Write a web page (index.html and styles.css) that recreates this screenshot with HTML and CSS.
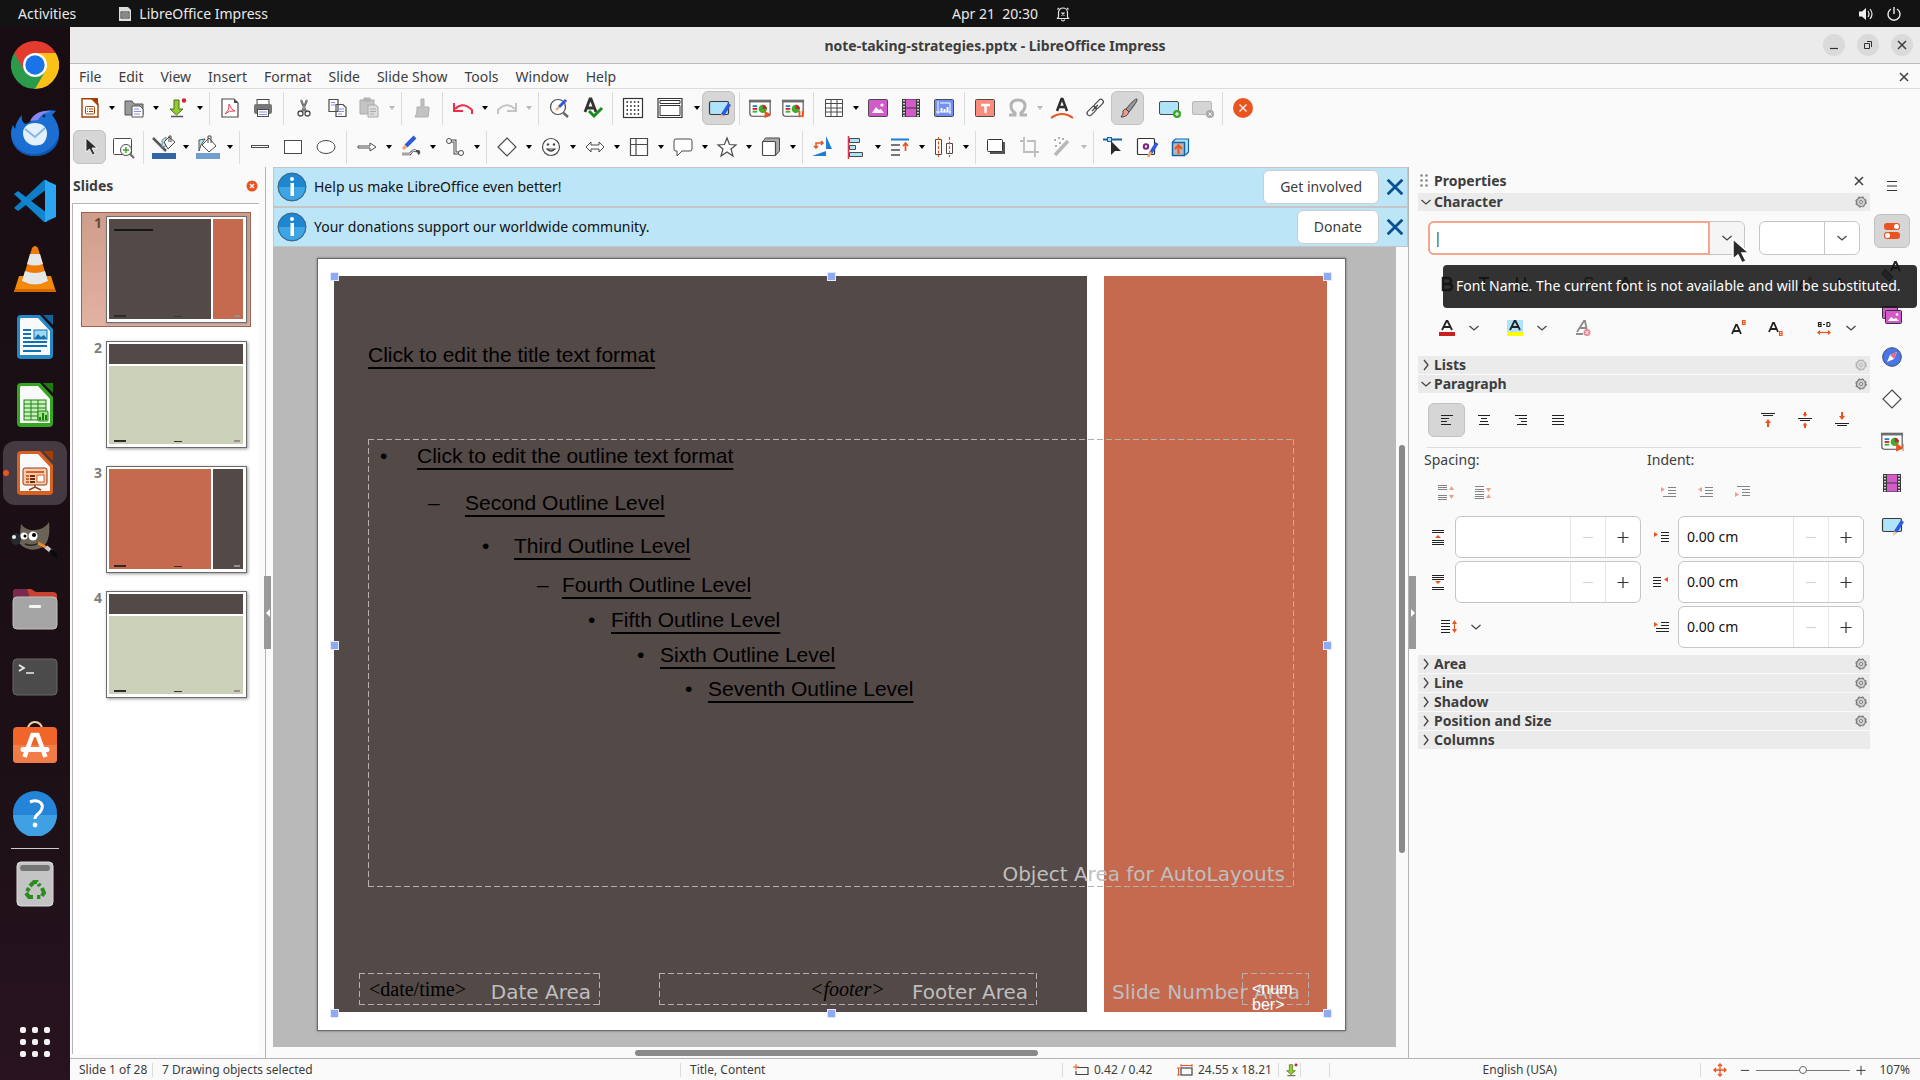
FILE: index.html
```html
<!DOCTYPE html>
<html lang="en">
  <head>
    <meta charset="UTF-8" />
    <meta name="viewport" content="width=device-width, initial-scale=1.0" />
    <title>note-taking-strategies.pptx - LibreOffice Impress</title>
    <link rel="stylesheet" href="styles.css">
  </head>
  <body>
    <!-- Shared icons -->
    <svg class="sprite" aria-hidden="true">
      <symbol id="chevron" viewBox="0 0 12 12"><path d="M1.500 4l4.500 4 4.500-4" fill="none" stroke="#444" stroke-width="1.300"/></symbol>
      <symbol id="chevron-right" viewBox="0 0 12 12"><path d="M4 1l4 5-4 5" fill="none" stroke="#444" stroke-width="1.300"/></symbol>
      <symbol id="cross" viewBox="0 0 12 12"><path d="M2 2l8 8M10 2l-8 8" fill="none" stroke="currentColor" stroke-width="1.500"/></symbol>
      <symbol id="plus" viewBox="0 0 12 12"><path d="M.5 6.500h11M6 1v11" fill="none" stroke="currentColor" stroke-width="1.200"/></symbol>
      <symbol id="minus" viewBox="0 0 12 12"><path d="M1 6.500h10" fill="none" stroke="currentColor" stroke-width="1.200"/></symbol>
      <symbol id="gear" viewBox="0 0 12 12"><circle cx="6" cy="6" r="4.500" fill="#d0d0d0" stroke="#777" stroke-width="1.200"/><circle cx="6" cy="6" r="5.300" fill="none" stroke="#777" stroke-dasharray="2.200 2"/><circle cx="6" cy="6" r="1.500" fill="#fff" stroke="#777"/></symbol>
      <symbol id="info" viewBox="0 0 30 30"><circle cx="15" cy="15" r="14" fill="#1f86d2" stroke="#40617b"/><path d="M2 15a13 13 0 0 0 26 0z" fill="#3fa4e3"/><circle cx="15" cy="7" r="2" fill="#fff"/><rect x="13.500" y="11" width="3.500" height="13" fill="#fff"/></symbol>
      <symbol id="layout-pencil" viewBox="0 0 24 24"><rect x="2.500" y="5.500" width="19" height="13" rx="1.500" fill="#aee3f9" stroke="#3a3a38" stroke-width="1.200"/><path d="M21 7l3 2-7 11-3-2z" fill="#2e5bdc"/><path d="M14 18l3 2-4 3z" fill="#f4c08f"/></symbol>
      <symbol id="film" viewBox="0 0 24 24"><rect x="3" y="3" width="18" height="18" fill="#3a3a38"/><rect x="7" y="3.500" width="10" height="8" fill="#d25bc9"/><rect x="7" y="12.500" width="10" height="8" fill="#d25bc9"/><path d="M5 4v17M19 4v17" stroke="#fff" stroke-width="1.500" stroke-dasharray="1.500 1.500"/></symbol>
      <symbol id="board" viewBox="0 0 26 24"><path d="M2 5v13q0 3 3 3h16q3 0 3-3V5" fill="#fff" stroke="#4a4a48" stroke-width="1.200"/><rect x="1" y="3" width="24" height="3" fill="#6e6e6e"/><rect x="5" y="9" width="5" height="2" fill="#1c7fd6"/><rect x="5" y="12" width="5" height="2" fill="#d0213a"/><rect x="5" y="15" width="5" height="2" fill="#3fae2a"/><circle cx="16" cy="13" r="4.500" fill="#3fae2a"/><path d="M16 13V8.500a4.500 4.500 0 0 1 4.500 4.500z" fill="#c9213a"/></symbol>
      <symbol id="diamond" viewBox="0 0 24 24"><path d="M12 3l9 9-9 9-9-9z" fill="#fff" stroke="#4a4a48" stroke-width="1.200"/></symbol>
      <symbol id="save" viewBox="0 0 24 24"><path d="M8 4h5v9h4l-6.500 6L4 13h4z" fill="#93cc2f" stroke="#4a6a1a"/><path d="M5 20.500h12" stroke="#555" stroke-width="1.500"/><circle cx="18" cy="4.500" r="2.200" fill="#d0213a"/></symbol>
    </svg>

    <header class="topbar">
      <div class="topbar-left">
        <span>Activities</span>
        <span class="topbar-app">
          <svg width="14" height="16" viewBox="0 0 14 16"><path d="M1 1h9l3 3v11H1z" fill="#ddd"/><rect x="3" y="6" width="8" height="6" fill="none" stroke="#333"/><path d="M4 8h6M4 10h6" stroke="#333"/></svg>
          LibreOffice Impress
        </span>
      </div>
      <div class="topbar-clock">
        <span>Apr 21&nbsp; 20:30</span>
        <svg width="14" height="16" viewBox="0 0 14 16"><path d="M2.500 11V6.500a4.500 4.500 0 0 1 9 0V11l1 1.500h-11zM5.500 13.500a1.500 1.500 0 0 0 3 0M3 2L1.500 3.500M11 2l1.500 1.500M5.500 6.500l3 3M8.500 6.500l-3 3" fill="none" stroke="#e8e8e8" stroke-width="1.200"/></svg>
      </div>
      <div class="topbar-tray">
        <svg width="16" height="16" viewBox="0 0 16 16"><path d="M1 5.500h3L8 2v12l-4-3.500H1z" fill="#eee"/><path d="M10 5q2 3 0 6M12 3q4 5 0 10" fill="none" stroke="#eee" stroke-width="1.200"/></svg>
        <svg width="16" height="16" viewBox="0 0 16 16"><path d="M5 3a6 6 0 1 0 6 0M8 1v7" fill="none" stroke="#eee" stroke-width="1.400"/></svg>
      </div>
    </header>

    <div class="desktop">
      <nav class="dock" aria-label="Dock">
        <button class="dock-item" aria-label="Google Chrome">
          <svg width="48" height="48" viewBox="0 0 48 48"><path d="M24 24L3.200 12A24 24 0 0 1 44.800 12z" fill="#e33b2e"/><path d="M24 24L44.800 12A24 24 0 0 1 24 48z" fill="#fbc116"/><path d="M24 24V48A24 24 0 0 1 3.200 12z" fill="#2a9a4b"/><path d="M24 12h20.800L36 30z" fill="#fbc116"/><path d="M13.600 30L3.200 12 24 12z" fill="#e33b2e"/><path d="M34.400 30L24 48 13.600 30z" fill="#2a9a4b"/><circle cx="24" cy="24" r="12" fill="#fff"/><circle cx="24" cy="24" r="9.700" fill="#1a73e8"/></svg>
        </button>
        <button class="dock-item" aria-label="Thunderbird">
          <svg width="48" height="48" viewBox="0 0 48 48"><path d="M24 10C28 2 38 0 45 2l-4 4c5 6 7 12 7 18 0 13-10 23-24 23C9 47 0 37 0 24c0-3 1-6 2-8l2 4c1-6 3-10 7-14-1 5 1 8 4 9z" fill="#1b6fd3"/><path d="M0 24c2 16 14 22 26 21 12-2 19-9 22-19 0 12-10 21-24 21S0 37 0 24z" fill="#0e55ae"/><path d="M19 12c4-8 13-12 21-9-7 0-10 3-13 8z" fill="#8d86ee"/><path d="M12 24c0-6 5-10 12-10s12 4 12 10-3 12-8 12c-9 2-16-4-16-12z" fill="#e4f1fd"/><path d="M14 20l10 8 10-9" fill="none" stroke="#86b6e8" stroke-width="2"/><circle cx="33" cy="7" r="1.500" fill="#062a63"/></svg>
        </button>
        <button class="dock-item" aria-label="Visual Studio Code">
          <svg width="44" height="44" viewBox="0 0 44 44"><path d="M1 29l4 3L34 10V1L31 1z" fill="#0f7dc6"/><path d="M1 15l4-3L34 34v9h-3z" fill="#1284d0"/><path d="M32 1l11 5v32l-11 5z" fill="#2aa6f2"/></svg>
        </button>
        <button class="dock-item" aria-label="VLC media player">
          <svg width="44" height="48" viewBox="0 0 44 48"><path d="M6 31h32l5 16H1z" fill="#f48a0c"/><path d="M2 44h40l1 3H1z" fill="#d56b00"/><path d="M19 3q3-4 6 0l10 34q-13 7-26 0z" fill="#f07c08"/><path d="M17 9h10l3 10q-8 3-16 0zM12 26q10 4 20 0l3 10q-13 7-26 0z" fill="#e6e8e8"/></svg>
        </button>
        <button class="dock-item" aria-label="LibreOffice Writer">
          <svg width="38" height="46" viewBox="0 0 38 46"><path d="M5 1h19l13 14v26q0 4-4 4H5q-4 0-4-4V5q0-4 4-4z" fill="#2488c4"/><path d="M27 1h10v10z" fill="#0f669e"/><path d="M5 4h17l12 13v24H4V5z" fill="#fafafa"/><path d="M7 16h8M7 20h8M7 24h8M7 28h24M7 32h24M7 37h18" stroke="#0f72b4" stroke-width="2"/><rect x="18" y="16" width="13" height="9" fill="#9fd8f5" stroke="#0f72b4"/><path d="M18 25l4-5 3 3 3-2 3 4z" fill="#0f72b4"/></svg>
        </button>
        <button class="dock-item" aria-label="LibreOffice Calc">
          <svg width="38" height="46" viewBox="0 0 38 46"><path d="M5 1h19l13 14v26q0 4-4 4H5q-4 0-4-4V5q0-4 4-4z" fill="#33a71e"/><path d="M27 1h10v10z" fill="#1f7d10"/><path d="M5 4h17l12 13v24H4V5z" fill="#fafafa"/><rect x="8" y="18" width="22" height="20" fill="#c8f0bd" stroke="#1f8110"/><path d="M8 22h22M8 26h22M8 30h22M8 34h22M15 18v20M22 18v20" stroke="#1f8110"/><rect x="22" y="29" width="10" height="10" rx="1" fill="#9fe08c" stroke="#1f8110"/><path d="M24 38v-3M27 38v-7M30 38v-5" stroke="#1f8110" stroke-width="2"/></svg>
        </button>
        <button class="dock-item dock-item-active" aria-label="LibreOffice Impress">
          <svg width="38" height="46" viewBox="0 0 38 46"><path d="M5 1h19l13 14v26q0 4-4 4H5q-4 0-4-4V5q0-4 4-4z" fill="#d9601f"/><path d="M27 1h10v10z" fill="#a33e04"/><path d="M5 4h17l12 13v24H4V5z" fill="#fafafa"/><rect x="7" y="18" width="24" height="17" rx="2" fill="#f6cdb4" stroke="#8d3c10"/><path d="M10 22h18" stroke="#d9601f" stroke-width="2"/><path d="M10 26h3M10 29h3M10 32h3" stroke="#d9601f" stroke-width="2"/><path d="M14 26h5M14 29h5M14 32h5" stroke="#6c2a06" stroke-width="2"/><rect x="21" y="25" width="7" height="7" fill="#fff" stroke="#d9601f"/><path d="M19 35v2M13 40l6-3 6 3" fill="none" stroke="#8d3c10" stroke-width="1.500"/></svg>
        </button>
        <button class="dock-item" aria-label="GIMP">
          <svg width="48" height="42" viewBox="0 0 48 42"><path d="M10 4q5 7 14 6 10-1 14-8 2 18-6 25-14 7-24-4z" fill="#6b6355"/><ellipse cx="5" cy="19" rx="5" ry="6" fill="#222b30"/><circle cx="3" cy="17" r="2" fill="#eee"/><circle cx="13" cy="16" r="3.500" fill="#fff"/><circle cx="22" cy="16" r="4.500" fill="#fff"/><circle cx="14" cy="16" r="1.500"/><circle cx="23" cy="15" r="2"/><path d="M14 24q8 3 14-1" fill="none" stroke="#222" stroke-width="1.500"/><path d="M27 23l11 6" stroke="#e8892c" stroke-width="3"/><path d="M35 27l6 5" stroke="#ccc" stroke-width="4"/><path d="M40 29q6 2 7 10-6-2-9-7z" fill="#0b0b0b"/></svg>
        </button>
        <button class="dock-item" aria-label="Files">
          <svg width="46" height="42" viewBox="0 0 46 42"><path d="M1 5q0-4 4-4h14l5 3h17q4 0 4 4v10H1z" fill="#c9412f"/><path d="M1 5q0-4 4-4h10l4 12H1z" fill="#7b2a4f"/><rect x="1" y="9" width="44" height="32" rx="4" fill="#a5a5a5" stroke="#c0c0c0"/><rect x="17" y="17" width="12" height="3" rx="1" fill="#f5f5f5"/></svg>
        </button>
        <button class="dock-item" aria-label="Terminal">
          <svg width="46" height="38" viewBox="0 0 46 38"><rect x="1" y="1" width="44" height="36" rx="4" fill="#4b4b4b" stroke="#686868"/><path d="M7 7l5 3-5 3M14 15h8" fill="none" stroke="#eee" stroke-width="1.700"/></svg>
        </button>
        <button class="dock-item" aria-label="Ubuntu Software">
          <svg width="46" height="50" viewBox="0 0 46 50"><path d="M16 9a7 7 0 0 1 14 0" fill="none" stroke="#f3d3a5" stroke-width="2"/><rect x="1" y="7" width="44" height="36" rx="4" fill="#f0652a"/><path d="M1 25h44v14q0 4-4 4H5q-4 0-4-4z" fill="#f27c47"/><path d="M12.500 37l8-22h5l8 22" fill="none" stroke="#fff" stroke-width="4.500"/><path d="M11 29.500h24" stroke="#fff" stroke-width="5" stroke-linecap="round"/></svg>
        </button>
        <button class="dock-item" aria-label="Help">
          <svg width="46" height="46" viewBox="0 0 46 46"><circle cx="23" cy="23" r="22" fill="#2384d8"/><path d="M1 25a22 22 0 0 0 44 0z" fill="#3fa0e4"/><path d="M18 12q7-3 11 1 3 4-1 9-5 4-5 7" fill="none" stroke="#fff" stroke-width="3"/><circle cx="23" cy="35" r="2.400" fill="#fff"/></svg>
        </button>
        <hr class="dock-line" />
        <button class="dock-item" aria-label="Trash">
          <svg width="38" height="46" viewBox="0 0 38 46"><rect x="1" y="1" width="36" height="44" rx="4" fill="#c4c4c4" stroke="#dcdcdc"/><rect x="4" y="4" width="30" height="6" rx="3" fill="#757575"/><g fill="none" stroke="#2b8a20" stroke-width="4"><path d="M14 25l4-4h3l3 4M26 27l2 5-3 4h-4M17 36h-4l-3-4 3-5" stroke-dasharray="9 2"/></g></svg>
        </button>
        <button class="dock-item dock-apps" aria-label="Show applications">
          <svg width="30" height="30" viewBox="0 0 30 30" fill="#f2f2f2"><rect width="6" height="6" rx="2"/><rect x="12" width="6" height="6" rx="2"/><rect x="24" width="6" height="6" rx="2"/><rect y="12" width="6" height="6" rx="2"/><rect x="12" y="12" width="6" height="6" rx="2"/><rect x="24" y="12" width="6" height="6" rx="2"/><rect y="24" width="6" height="6" rx="2"/><rect x="12" y="24" width="6" height="6" rx="2"/><rect x="24" y="24" width="6" height="6" rx="2"/></svg>
        </button>
      </nav>

      <main class="window">
        <div class="titlebar">
          <h1>note-taking-strategies.pptx - LibreOffice Impress</h1>
          <div class="window-buttons">
            <button aria-label="Minimize"><svg width="12" height="12" viewBox="0 0 12 12"><path d="M2 9.500h8" stroke="#333" stroke-width="1.200"/></svg></button>
            <button aria-label="Restore"><svg width="12" height="12" viewBox="0 0 12 12"><path d="M2.500 4.500h5v5h-5zM5 2.500h4.500V8" fill="none" stroke="#333"/></svg></button>
            <button aria-label="Close"><svg width="12" height="12"><use href="#cross"/></svg></button>
          </div>
        </div>

        <div class="menubar">
          <button>File</button>
          <button>Edit</button>
          <button>View</button>
          <button>Insert</button>
          <button>Format</button>
          <button>Slide</button>
          <button>Slide Show</button>
          <button>Tools</button>
          <button>Window</button>
          <button>Help</button>
          <button class="menubar-close" aria-label="Close document"><svg width="12" height="12"><use href="#cross"/></svg></button>
        </div>

        <!-- Standard toolbar -->
        <div class="toolbar" role="toolbar" aria-label="Standard">
          <button class="tool" aria-label="New"><svg viewBox="0 0 24 24"><path d="M4 2.700h11l5 5V21H4z" fill="#fff" stroke="#a33e04" stroke-width="1.400"/><path d="M12 2h8v8z" fill="#a33e04"/><rect x="7.500" y="10.500" width="9" height="7.500" rx="1" fill="none" stroke="#a33e04"/><path d="M9 13h1M11 13h4M9 15.500h1M11 15.500h4" stroke="#a33e04"/></svg></button>
          <button class="drop" aria-label="New options"></button>
          <button class="tool" aria-label="Open"><svg viewBox="0 0 24 24"><path d="M3 19V5h7l2 3h9v11z" fill="#9b9b9b" stroke="#555"/><path d="M10 10h8l3 3v8H10z" fill="#fff" stroke="#555"/><path d="M12 13h5M12 15.500h7M12 18h6" stroke="#8b8bea"/></svg></button>
          <button class="drop" aria-label="Open options"></button>
          <button class="tool" aria-label="Save"><svg viewBox="0 0 24 24"><use href="#save"/></svg></button>
          <button class="drop" aria-label="Save options"></button>
          <span class="sep"></span>
          <button class="tool" aria-label="Export as PDF"><svg viewBox="0 0 24 24"><path d="M4 3h12l4 4v14H4z" fill="#fff" stroke="#4a4a48" stroke-width="1.200"/><path d="M16 3v4h4z" fill="#4a4a48"/><path d="M11 8q2 6 6 7-6-1-10 3 5-4 4-10z" fill="none" stroke="#ee3a57"/></svg></button>
          <button class="tool" aria-label="Print"><svg viewBox="0 0 24 24"><rect x="6" y="3.500" width="12" height="6" fill="#fff" stroke="#4a4a48"/><rect x="3" y="8" width="18" height="10" rx="2" fill="#777"/><rect x="6.500" y="13.500" width="11" height="7" fill="#fff" stroke="#4a4a48"/><path d="M8 16h8M8 18.500h8" stroke="#8b8bea"/></svg></button>
          <span class="sep"></span>
          <button class="tool" aria-label="Cut"><svg viewBox="0 0 24 24"><path d="M9 4l5 12M15 4l-5 12" stroke="#4a4a48" stroke-width="2"/><path d="M9 4l5 12M15 4l-5 12" stroke="#ccc" stroke-width=".6"/><circle cx="8.500" cy="17.500" r="2.500" fill="none" stroke="#4a4a48" stroke-width="1.300"/><circle cx="15.500" cy="17.500" r="2.500" fill="none" stroke="#4a4a48" stroke-width="1.300"/></svg></button>
          <button class="tool" aria-label="Copy"><svg viewBox="0 0 24 24"><path d="M4 3.500h9v12H4zM11 8.500h7l3 3v9H11z" fill="#fff" stroke="#4a4a48" stroke-width="1.200"/><path d="M6 6.500h4M6 9h4M13 13h6M13 15.500h6M13 18h4" stroke="#8b8bea"/></svg></button>
          <button class="tool" aria-label="Paste"><svg viewBox="0 0 24 24"><path d="M2 4h14v14H2zM6 2h6v3H6z" fill="#c4c4c4" stroke="#aaa"/><path d="M10 9h8l2 2v10H10z" fill="#ddd" stroke="#aaa"/><path d="M12 13h6M12 15.500h6M12 18h4" stroke="#aaa"/></svg></button>
          <button class="drop drop-off" aria-label="Paste options"></button>
          <span class="sep"></span>
          <button class="tool" aria-label="Clone formatting"><svg viewBox="0 0 24 24"><path d="M11 3h3v8h5v3l-1 7H5q2-3 2-7v-3h4z" fill="#c2c2c2" stroke="#b0b0b0"/></svg></button>
          <span class="sep"></span>
          <button class="tool" aria-label="Undo"><svg viewBox="0 0 24 24"><path d="M4 13q8-8 17 1v4" fill="none" stroke="#ef2b45" stroke-width="2"/><path d="M3 7v8h9" fill="none" stroke="#ef2b45" stroke-width="2"/></svg></button>
          <button class="drop" aria-label="Undo options"></button>
          <button class="tool" aria-label="Redo"><svg viewBox="0 0 24 24"><path d="M20 13q-8-8-17 1v4" fill="none" stroke="#c4c4c4" stroke-width="2"/><path d="M21 7v8h-9" fill="none" stroke="#c4c4c4" stroke-width="2"/></svg></button>
          <button class="drop drop-off" aria-label="Redo options"></button>
          <span class="sep"></span>
          <button class="tool" aria-label="Find and replace"><svg viewBox="0 0 24 24"><circle cx="11" cy="11" r="7.500" fill="#fff" stroke="#4a4a48" stroke-width="1.200"/><path d="M16.500 17l4.500 4" stroke="#666" stroke-width="2.500"/><path d="M19 4l-7 7" stroke="#2e5bdc" stroke-width="3"/><path d="M12 11l-3 3" stroke="#f4a46a" stroke-width="2"/></svg></button>
          <button class="tool" aria-label="Spelling"><svg viewBox="0 0 24 24"><path d="M5 16l5-13h1l5 13M7 12h8" fill="none" stroke="#333" stroke-width="2.800"/><path d="M9 15l5 5 8-8" fill="none" stroke="#178a1f" stroke-width="3"/></svg></button>
          <span class="sep"></span>
          <button class="tool" aria-label="Display grid"><svg viewBox="0 0 24 24"><rect x="2.500" y="2.500" width="19" height="19" fill="#fff" stroke="#333" stroke-width="1.200"/><g stroke="#111" stroke-width="1.500" stroke-dasharray="1.500 2.200"><path d="M5.500 6h14M5.500 10h14M5.500 14h14M5.500 18h14"/></g></svg></button>
          <button class="tool tool-wide" aria-label="Display views"><svg viewBox="0 0 28 24"><path d="M2 2.500h24v19H2z" fill="#fff" stroke="#333" stroke-width="1.200"/><path d="M4 4.500h20v3H4zM4 9.500h20v10H4z" fill="none" stroke="#333"/></svg></button>
          <button class="drop" aria-label="Display views options"></button>
          <button class="tool tool-on" aria-label="Master slide"><svg viewBox="0 0 24 24"><use href="#layout-pencil"/></svg></button>
          <span class="sep"></span>
          <button class="tool" aria-label="Start from first slide"><svg viewBox="0 0 26 24"><use href="#board"/><path d="M18 15l7 4-7 4z" fill="#e95420"/></svg></button>
          <button class="tool" aria-label="Start from current slide"><svg viewBox="0 0 26 24"><use href="#board"/><path d="M20 15v7M23.500 15v7" stroke="#e95420" stroke-width="2"/></svg></button>
          <span class="sep"></span>
          <button class="tool" aria-label="Table"><svg viewBox="0 0 24 24"><path d="M3.500 3.500h17v17h-17zM9 3.500v17M15 3.500v17M3.500 7.500h17M3.500 12h17M3.500 16h17" fill="#fff" stroke="#4a4a48"/></svg></button>
          <button class="drop" aria-label="Table options"></button>
          <button class="tool" aria-label="Insert image"><svg viewBox="0 0 24 24"><rect x="2.500" y="3.500" width="19" height="17" rx="1" fill="#d25bc9" stroke="#4a4a48"/><path d="M6 17l4-6 3 3 2-1 3 4z" fill="#fff"/><circle cx="16" cy="9" r="1.600" fill="#fff"/></svg></button>
          <button class="tool" aria-label="Insert media"><svg viewBox="0 0 24 24"><use href="#film"/></svg></button>
          <button class="tool" aria-label="Insert chart"><svg viewBox="0 0 24 24"><rect x="2.500" y="3.500" width="19" height="17" rx="1" fill="#7391f4" stroke="#4a4a48"/><path d="M6 5v13M4 16h15M8 7h10v11" fill="none" stroke="#fff"/><path d="M9.500 16v-4M12.500 16v-3M15.500 16v-5" stroke="#fff" stroke-width="2"/></svg></button>
          <span class="sep"></span>
          <button class="tool" aria-label="Insert text box"><svg viewBox="0 0 24 24"><rect x="2.500" y="3.500" width="19" height="17" rx="1" fill="#fb8b7a" stroke="#4a4a48"/><path d="M8 9h9M12.500 9v8" stroke="#fff" stroke-width="2.500"/></svg></button>
          <button class="tool" aria-label="Special character"><svg viewBox="0 0 24 24"><path d="M3 19h6v-2q-4-3-4-7 0-6 7-6t7 6q0 4-4 7v2h6" fill="none" stroke="#b4b4b4" stroke-width="3"/></svg></button>
          <button class="drop drop-off" aria-label="Special character options"></button>
          <button class="tool" aria-label="Fontwork"><svg viewBox="0 0 24 24"><path d="M7 15l4.500-12h1L17 15M8.500 11h7" fill="none" stroke="#2e2e2e" stroke-width="2.500"/><path d="M1 22q11-8 22 0" fill="none" stroke="#e95420" stroke-width="2"/></svg></button>
          <button class="tool" aria-label="Hyperlink"><svg viewBox="0 0 24 24"><g fill="none" stroke="#4a4a48" stroke-width="1.200"><rect x="10" y="6" width="11" height="5" rx="2.500" transform="rotate(-45 15 8)"/><rect x="3" y="13" width="11" height="5" rx="2.500" transform="rotate(-45 8 15)"/><path d="M9 15l6-6"/></g></svg></button>
          <button class="tool tool-on" aria-label="Show draw functions"><svg viewBox="0 0 24 24"><path d="M21 3q1 2-8 13l-3-3q9-11 11-10z" fill="#999" stroke="#444"/><path d="M10 13l3 3q-2 5-8 5 3-3 2-6 1-2 3-2z" fill="#f49a86" stroke="#444"/></svg></button>
          <span class="gap"></span>
          <button class="tool" aria-label="New slide"><svg viewBox="0 0 24 24"><rect x="2.500" y="5.500" width="19" height="13" rx="1.500" fill="#aee3f9" stroke="#4a4a48"/><circle cx="20" cy="18" r="4" fill="#3fa52a"/><path d="M20 16v4M18 18h4" stroke="#fff"/></svg></button>
          <button class="tool" aria-label="Duplicate slide"><svg viewBox="0 0 24 24"><rect x="2.500" y="5.500" width="19" height="13" rx="1.500" fill="#d4d4d4" stroke="#b8b8b8"/><circle cx="20" cy="18" r="4" fill="#a8a8a8"/><path d="M18.500 16.500l3 3M21.500 16.500l-3 3" stroke="#fff"/></svg></button>
          <span class="sep"></span>
          <button class="tool" aria-label="Close master view"><svg viewBox="0 0 24 24"><circle cx="12" cy="12" r="10" fill="#e95420"/><path d="M8.500 8.500l7 7M15.500 8.500l-7 7" stroke="#fff" stroke-width="1.200"/></svg></button>
        </div>

        <!-- Drawing toolbar -->
        <div class="toolbar" role="toolbar" aria-label="Drawing">
          <button class="tool tool-on" aria-label="Select"><svg viewBox="0 0 24 24"><path d="M8 3v14l3.500-3 3 6 2.500-1-3-6h5z" fill="#2b2b2b" stroke="#fff" stroke-width=".8"/></svg></button>
          <button class="tool" aria-label="Zoom and pan"><svg viewBox="0 0 24 24"><rect x="2.500" y="3.500" width="18" height="16" rx="1" fill="#fff" stroke="#4a4a48"/><circle cx="15" cy="15" r="5.500" fill="#fff" stroke="#4a4a48"/><path d="M19 19l4 4" stroke="#666" stroke-width="2"/><path d="M15 12v6M12 15h6" stroke="#3fa52a" stroke-width="1.500"/></svg></button>
          <span class="sep"></span>
          <button class="tool" aria-label="Line color"><svg viewBox="0 0 24 24"><path d="M1 3l13 13" stroke="#555" stroke-width="2.500"/><path d="M10 12V5l4-3v9z" fill="#aee3f9" stroke="#888"/><path d="M12 7l5-5 6 5-7 7z" fill="#fff" stroke="#4a4a48"/><path d="M17 7V1h2v6" fill="none" stroke="#4a4a48"/><rect y="18" width="24" height="6" fill="#3465a4"/></svg></button>
          <button class="drop" aria-label="Line color options"></button>
          <button class="tool" aria-label="Fill color"><svg viewBox="0 0 24 24"><path d="M3 16V5l6-1-4 6z" fill="#aee3f9" stroke="#555"/><path d="M6 10l7-7 7 8-7 6z" fill="#fff" stroke="#4a4a48"/><path d="M12 8V1h3v7" fill="none" stroke="#4a4a48"/><rect y="18" width="24" height="6" fill="#729fcf"/></svg></button>
          <button class="drop" aria-label="Fill color options"></button>
          <span class="sep"></span>
          <button class="tool" aria-label="Insert line"><svg viewBox="0 0 24 24"><rect x="3.500" y="10.500" width="17" height="2" fill="#fff" stroke="#4a4a48"/></svg></button>
          <button class="tool" aria-label="Rectangle"><svg viewBox="0 0 24 24"><rect x="3.500" y="5.500" width="17" height="13" fill="#fff" stroke="#4a4a48"/></svg></button>
          <button class="tool" aria-label="Ellipse"><svg viewBox="0 0 24 24"><ellipse cx="12" cy="12" rx="9" ry="6.500" fill="#fff" stroke="#4a4a48"/></svg></button>
          <span class="sep"></span>
          <button class="tool" aria-label="Lines and arrows"><svg viewBox="0 0 24 24"><path d="M3 11h12V8l6 4-6 4v-3H3z" fill="#fff" stroke="#4a4a48"/></svg></button>
          <button class="drop" aria-label="Arrow options"></button>
          <button class="tool" aria-label="Curves and polygons"><svg viewBox="0 0 24 24"><path d="M16 2l-9 9" stroke="#2e5bdc" stroke-width="4"/><path d="M7 11l-3 3" stroke="#f4a46a" stroke-width="3"/><path d="M3 19h8q3-5 6-3 5 0 2 3" fill="none" stroke="#4a4a48" stroke-width="2.500"/><path d="M3 19h8q3-5 6-3" fill="none" stroke="#fff"/></svg></button>
          <button class="drop" aria-label="Curve options"></button>
          <button class="tool" aria-label="Connectors"><svg viewBox="0 0 24 24"><path d="M7 6h5v12h6" fill="none" stroke="#4a4a48" stroke-width="3"/><path d="M7 6h5v12h6" fill="none" stroke="#fff"/><circle cx="6" cy="6" r="2.500" fill="#fff" stroke="#4a4a48"/><circle cx="18" cy="18" r="2.500" fill="#fff" stroke="#4a4a48"/></svg></button>
          <button class="drop" aria-label="Connector options"></button>
          <span class="sep"></span>
          <button class="tool" aria-label="Basic shapes"><svg viewBox="0 0 24 24"><use href="#diamond"/></svg></button>
          <button class="drop" aria-label="Basic shape options"></button>
          <button class="tool" aria-label="Symbol shapes"><svg viewBox="0 0 24 24"><circle cx="12" cy="12" r="8.500" fill="#fff" stroke="#4a4a48" stroke-width="1.200"/><circle cx="9" cy="9.500" r="1.200" fill="#444"/><circle cx="15" cy="9.500" r="1.200" fill="#444"/><path d="M8 14h8q-4 4-8 0z" fill="none" stroke="#444" stroke-width="1.200"/></svg></button>
          <button class="drop" aria-label="Symbol options"></button>
          <button class="tool" aria-label="Block arrows"><svg viewBox="0 0 24 24"><path d="M3 12l5-5v3h8V7l5 5-5 5v-3H8v3z" fill="#fff" stroke="#4a4a48"/></svg></button>
          <button class="drop" aria-label="Block arrow options"></button>
          <button class="tool" aria-label="Flowchart"><svg viewBox="0 0 24 24"><path d="M3.500 3.500h17v17h-17zM9 3.500v17M3.500 9.500h17" fill="#fff" stroke="#4a4a48" stroke-width="1.200"/></svg></button>
          <button class="drop" aria-label="Flowchart options"></button>
          <button class="tool" aria-label="Callouts"><svg viewBox="0 0 24 24"><path d="M5 4h14q2 0 2 2v8q0 2-2 2h-8l-5 5v-5H5q-2 0-2-2V6q0-2 2-2z" fill="#fff" stroke="#4a4a48"/></svg></button>
          <button class="drop" aria-label="Callout options"></button>
          <button class="tool" aria-label="Stars and banners"><svg viewBox="0 0 24 24"><path d="M12 3l2.500 6.500 6.500.5-5 4 2 7-6-4-6 4 2-7-5-4 6.500-.5z" fill="#fff" stroke="#4a4a48" stroke-width="1.200"/></svg></button>
          <button class="drop" aria-label="Star options"></button>
          <button class="tool" aria-label="3D objects"><svg viewBox="0 0 24 24"><path d="M3.500 7l3-4h14v13l-4 4.500" fill="#aaa" stroke="#4a4a48"/><rect x="3.500" y="6.500" width="13" height="14" rx="1" fill="#fff" stroke="#4a4a48" stroke-width="1.200"/></svg></button>
          <button class="drop" aria-label="3D object options"></button>
          <span class="sep"></span>
          <button class="tool" aria-label="Rotate"><svg viewBox="0 0 24 24"><path d="M15 1l6 13h-6zM1 21l14-5v5z" fill="#1c7fd6"/><path d="M5 12V8h6M3 11l2 2 2-2M10 6l2 2-2 2" fill="none" stroke="#e95420" stroke-width="1.500"/></svg></button>
          <button class="tool" aria-label="Align objects"><svg viewBox="0 0 24 24"><path d="M4.500 1v23" stroke="#e0324a" stroke-width="1.500"/><path d="M5.500 3.500h10v4h-10zM5.500 10.500h6v4h-6zM5.500 17.500h13v4h-13z" fill="#aee3f9" stroke="#4a4a48"/></svg></button>
          <button class="drop" aria-label="Align options"></button>
          <button class="tool" aria-label="Arrange"><svg viewBox="0 0 24 24"><path d="M3 4.500h18" stroke="#1c7fd6" stroke-width="2"/><path d="M3 10h9M3 15h9M3 20h9" stroke="#777" stroke-width="2"/><path d="M17.500 16V9M15 11l2.500-3 2.500 3" fill="none" stroke="#e95420" stroke-width="1.700"/></svg></button>
          <button class="drop" aria-label="Arrange options"></button>
          <button class="tool" aria-label="Distribute"><svg viewBox="0 0 24 24"><path d="M3.500 4.500h6v15h-6zM14.500 8.500h6v10h-6z" fill="#fff" stroke="#4a4a48"/><path d="M6.500 2v20M17.500 2v20" stroke="#e95420" stroke-width="1.200" stroke-dasharray="3 1.500"/></svg></button>
          <button class="drop" aria-label="Distribute options"></button>
          <span class="sep"></span>
          <button class="tool" aria-label="Shadow"><svg viewBox="0 0 24 24"><rect x="6" y="7" width="15" height="12" fill="#555"/><rect x="3.500" y="4.500" width="15" height="12" rx="1" fill="#fff" stroke="#333"/></svg></button>
          <button class="tool" aria-label="Crop image"><svg viewBox="0 0 24 24"><path d="M7 2v15h11M3 6h4M10 6h8v16M18 17h4" fill="none" stroke="#bdbdbd" stroke-width="1.800"/></svg></button>
          <button class="tool" aria-label="Filter"><svg viewBox="0 0 24 24"><path d="M5 20L18 6" stroke="#b8b8b8" stroke-width="3.500"/><path d="M4 5h2M8 3h2M9 8h2M5 11h2M12 4h2" stroke="#b0b0b0" stroke-width="2"/></svg></button>
          <button class="drop drop-off" aria-label="Filter options"></button>
          <span class="sep"></span>
          <button class="tool" aria-label="Edit points"><svg viewBox="0 0 24 24"><path d="M1 4.500h19" stroke="#1461a6" stroke-width="2"/><rect x="5.500" y="2.500" width="4" height="4" fill="#aee3f9" stroke="#1461a6"/><path d="M9 6v14l4-4h6z" fill="#2b2b2b"/></svg></button>
          <button class="tool" aria-label="Glue points"><svg viewBox="0 0 24 24"><rect x="2.500" y="3.500" width="17" height="16" rx="1" fill="#fff" stroke="#333" stroke-width="1.200"/><circle cx="11" cy="11.500" r="2.200" fill="#fff" stroke="#7d1f7c" stroke-width="2"/><path d="M22 8l-7 11" stroke="#2e5bdc" stroke-width="3.500"/><path d="M16 17l-3 5" stroke="#f4a46a" stroke-width="2.500"/></svg></button>
          <button class="tool" aria-label="Toggle extrusion"><svg viewBox="0 0 24 24"><path d="M4.500 7l3-3h13v13l-3 3" fill="#aee3f9" stroke="#1461a6" stroke-width="1.200"/><rect x="4.500" y="7.500" width="12" height="13" fill="#b8b8b8" stroke="#1461a6" stroke-width="1.500"/><path d="M10.500 19v-7M7 14l3.500-4 3.500 4" fill="none" stroke="#e95420" stroke-width="2"/></svg></button>
        </div>

        <div class="workspace">
          <aside class="slides">
            <div class="slides-head">
              <h2>Slides</h2>
              <button aria-label="Close slides pane"><svg width="12" height="12" viewBox="0 0 12 12"><circle cx="6" cy="6" r="5.500" fill="#e95420"/><path d="M4 4l4 4M8 4l-4 4" stroke="#fff" stroke-width="1.300"/></svg></button>
            </div>
            <ol class="slide-list">
              <li class="slide-item slide-item-on">
                <span>1</span>
                <div class="thumb thumb-side thumb-title">
                  <div class="fill-dark"></div>
                  <div class="fill-rust"></div>
                </div>
              </li>
              <li class="slide-item">
                <span>2</span>
                <div class="thumb thumb-top">
                  <div class="fill-dark"></div>
                  <div class="fill-sage"></div>
                </div>
              </li>
              <li class="slide-item">
                <span>3</span>
                <div class="thumb thumb-side">
                  <div class="fill-rust"></div>
                  <div class="fill-dark"></div>
                </div>
              </li>
              <li class="slide-item">
                <span>4</span>
                <div class="thumb thumb-top">
                  <div class="fill-dark"></div>
                  <div class="fill-sage"></div>
                </div>
              </li>
            </ol>
          </aside>
          <button class="grip grip-left" aria-label="Hide slides pane"></button>

          <section class="editor">
            <div class="infobar">
              <svg width="30" height="30"><use href="#info"/></svg>
              <p>Help us make LibreOffice even better!</p>
              <button class="info-btn">Get involved</button>
              <button class="info-close" aria-label="Dismiss"><svg width="22" height="22"><use href="#cross"/></svg></button>
            </div>
            <div class="infobar">
              <svg width="30" height="30"><use href="#info"/></svg>
              <p>Your donations support our worldwide community.</p>
              <button class="info-btn">Donate</button>
              <button class="info-close" aria-label="Dismiss"><svg width="22" height="22"><use href="#cross"/></svg></button>
            </div>
            <div class="editor-body">
              <div class="canvas">
                <div class="page">
                  <div class="shape shape-dark fill-dark"></div>
                  <div class="shape shape-rust fill-rust"></div>
                  <p class="title-text">Click to edit the title text format</p>
                  <div class="area area-object">Object Area for AutoLayouts</div>
                  <ul class="outline">
                    <li class="lv1"><i>•</i><span>Click to edit the outline text format</span></li>
                    <li class="lv2"><i>–</i><span>Second Outline Level</span></li>
                    <li class="lv3"><i>•</i><span>Third Outline Level</span></li>
                    <li class="lv4"><i>–</i><span>Fourth Outline Level</span></li>
                    <li class="lv5"><i>•</i><span>Fifth Outline Level</span></li>
                    <li class="lv6"><i>•</i><span>Sixth Outline Level</span></li>
                    <li class="lv7"><i>•</i><span>Seventh Outline Level</span></li>
                  </ul>
                  <div class="area area-date">Date Area</div>
                  <div class="area area-footer">Footer Area</div>
                  <div class="area area-number">Slide Number Area</div>
                  <p class="field field-date">&lt;date/time&gt;</p>
                  <p class="field field-footer">&lt;footer&gt;</p>
                  <p class="field field-number">&lt;num<br />ber&gt;</p>
                  <div class="selection">
                    <b class="handle tl"></b><b class="handle tc"></b><b class="handle tr"></b>
                    <b class="handle ml"></b><b class="handle mr"></b>
                    <b class="handle bl"></b><b class="handle bc"></b><b class="handle br"></b>
                  </div>
                </div>
              </div>
              <div class="vscroll"><div class="vthumb"></div></div>
            </div>
            <div class="hscroll"><div class="hthumb"></div></div>
          </section>
          <button class="grip grip-right" aria-label="Hide sidebar"></button>

          <aside class="sidebar">
            <div class="panel">
              <div class="panel-head">
                <svg width="8" height="14" viewBox="0 0 8 14" fill="#888"><circle cx="1.500" cy="1.500" r="1.300"/><circle cx="6.500" cy="1.500" r="1.300"/><circle cx="1.500" cy="6.500" r="1.300"/><circle cx="6.500" cy="6.500" r="1.300"/><circle cx="1.500" cy="11.500" r="1.300"/><circle cx="6.500" cy="11.500" r="1.300"/></svg>
                <h2>Properties</h2>
                <button aria-label="Close sidebar"><svg width="12" height="12"><use href="#cross"/></svg></button>
              </div>

              <h3 class="deck"><svg width="12" height="12"><use href="#chevron"/></svg>Character<svg class="gear" width="12" height="12"><use href="#gear"/></svg></h3>
              <div class="character">
                <div class="font-row">
                  <div class="font-name">
                    <input type="text" aria-label="Font name" value="|" />
                    <button aria-label="Font list"><svg width="12" height="12"><use href="#chevron"/></svg></button>
                    <svg class="pointer" width="20" height="28" viewBox="0 0 20 28"><path d="M2 2v20l5-4 4 8 4-2-4-8h7z" fill="#2b2b2b" stroke="#fff" stroke-width="1.500"/></svg>
                    <div class="tooltip">Font Name. The current font is not available and will be substituted.</div>
                  </div>
                  <div class="font-size">
                    <input type="text" aria-label="Font size" />
                    <button aria-label="Size list"><svg width="12" height="12"><use href="#chevron"/></svg></button>
                  </div>
                </div>
                <div class="icon-row">
                  <button class="side-tool" aria-label="Bold"><svg viewBox="0 0 18 18"><path d="M5 3h4q4 0 4 3t-4 3H5zM5 9h5q4 0 4 3t-4 3H5z" fill="none" stroke="#222" stroke-width="2.500"/></svg></button>
                  <button class="side-tool" aria-label="Italic"><svg viewBox="0 0 18 18"><path d="M4 3h10M9.500 3L7.500 15" fill="none" stroke="#222" stroke-width="2"/></svg></button>
                  <button class="side-tool" aria-label="Underline"><svg viewBox="0 0 18 18"><path d="M5 2v6q0 4 4 4t4-4V2M3 16h12" fill="none" stroke="#222" stroke-width="1.800"/></svg></button>
                  <button class="side-drop" aria-label="Underline options"><svg width="12" height="12"><use href="#chevron"/></svg></button>
                  <button class="side-tool" aria-label="Strikethrough"><svg viewBox="0 0 18 18"><path d="M13 4q-7-3-8 1 0 3 4 4t4 3q-1 4-8 2M2 9h14" fill="none" stroke="#222" stroke-width="1.500"/></svg></button>
                  <button class="side-tool" aria-label="Shadow"><svg viewBox="0 0 18 18"><path d="M3 15l5-12h1l5 12M5 11h7" fill="none" stroke="#222" stroke-width="1.800"/></svg></button>
                  <span class="push"></span>
                  <button class="side-tool" aria-label="Increase font size"><svg viewBox="0 0 18 18"><path d="M2 16L6 6h1l4 10M3 13h7" fill="none" stroke="#222" stroke-width="1.800"/><path d="M14 10V3M12 5l2-3 2 3" fill="none" stroke="#e95420" stroke-width="1.200"/></svg></button>
                  <button class="side-tool" aria-label="Decrease font size"><svg viewBox="0 0 18 18"><path d="M2 14L6 4h1l4 10M3 11h7" fill="none" stroke="#222" stroke-width="1.800"/></svg></button>
                </div>
                <div class="icon-row">
                  <button class="side-tool" aria-label="Font color"><svg viewBox="0 0 18 18"><path d="M4 11l4.500-9h1L14 11M6 8h6" fill="none" stroke="#222" stroke-width="1.800"/><rect x="1" y="13" width="16" height="4" fill="#c9211e"/></svg></button>
                  <button class="side-drop" aria-label="Font color options"><svg width="12" height="12"><use href="#chevron"/></svg></button>
                  <button class="side-tool" aria-label="Highlighting"><svg viewBox="0 0 18 18"><rect x="1" y="1" width="16" height="12" fill="#aee3f9"/><path d="M4 11l4.500-9h1L14 11M6 8h6" fill="none" stroke="#222" stroke-width="1.800"/><rect x="1" y="13" width="16" height="4" fill="#ffff00"/></svg></button>
                  <button class="side-drop" aria-label="Highlighting options"><svg width="12" height="12"><use href="#chevron"/></svg></button>
                  <button class="side-tool" aria-label="Clear formatting"><svg viewBox="0 0 18 18" opacity=".55"><path d="M3 13l7-11h1l2 10M6 9h6M2 15h7" fill="none" stroke="#333" stroke-width="1.800"/><circle cx="13" cy="13.500" r="3.500" fill="#e0324a"/><path d="M11.500 12l3 3M14.500 12l-3 3" stroke="#fff"/></svg></button>
                  <span class="push"></span>
                  <button class="side-tool" aria-label="Superscript"><svg viewBox="0 0 18 18"><path d="M3 15l4-9h1l4 9M4.500 12h6" fill="none" stroke="#222" stroke-width="1.800"/><path d="M13.500 1.500h2.500v4h-2.500zM13.500 3.500h3" fill="none" stroke="#e95420" stroke-width="1.200"/></svg></button>
                  <button class="side-tool" aria-label="Subscript"><svg viewBox="0 0 18 18"><path d="M3 13l4-9h1l4 9M4.500 10h6" fill="none" stroke="#222" stroke-width="1.800"/><path d="M13.500 12.500h2.500v4h-2.500zM13.500 14.500h3" fill="none" stroke="#e95420" stroke-width="1.200"/></svg></button>
                  <button class="side-tool side-tool-wide" aria-label="Character spacing"><svg viewBox="0 0 18 18"><path d="M3.500 3.500h2.500v4H3.500zM3.500 5.500h3M8 5.500h2M12 3.500h2q1 0 1 2t-1 2h-2z" fill="none" stroke="#222" stroke-width="1.200"/><path d="M3 13.500h12" stroke="#e95420" stroke-width="1.200"/><path d="M5 11v5l-3-2.500zM13 11v5l3-2.500z" fill="#e95420"/></svg></button>
                  <button class="side-drop side-drop-end" aria-label="Character spacing options"><svg width="12" height="12"><use href="#chevron"/></svg></button>
                </div>
              </div>

              <h3 class="deck"><svg width="12" height="12"><use href="#chevron-right"/></svg>Lists<svg class="gear gear-off" width="12" height="12"><use href="#gear"/></svg></h3>
              <h3 class="deck"><svg width="12" height="12"><use href="#chevron"/></svg>Paragraph<svg class="gear" width="12" height="12"><use href="#gear"/></svg></h3>
              <div class="paragraph">
                <div class="icon-row align-row">
                  <button class="side-tool side-on" aria-label="Align left"><svg viewBox="0 0 18 18"><path d="M3 4.500h12M3 7.500h8M3 10.500h6M3 13.500h10" stroke="#222"/></svg></button>
                  <button class="side-tool" aria-label="Center"><svg viewBox="0 0 18 18"><path d="M3 4.500h12M6 7.500h6M5 10.500h8M4 13.500h10" stroke="#222"/></svg></button>
                  <button class="side-tool" aria-label="Align right"><svg viewBox="0 0 18 18"><path d="M3 4.500h12M7 7.500h8M9 10.500h6M5 13.500h10" stroke="#222"/></svg></button>
                  <button class="side-tool" aria-label="Justify"><svg viewBox="0 0 18 18"><path d="M3 4.500h12M3 7.500h12M3 10.500h12M3 13.500h12" stroke="#222"/></svg></button>
                  <span class="push"></span>
                  <button class="side-tool" aria-label="Align top"><svg viewBox="0 0 18 18"><path d="M2 2.500h14M4 4.500h10" stroke="#222"/><path d="M9 16v-5" stroke="#e95420" stroke-width="2"/><path d="M6 12l3-4 3 4z" fill="#e95420"/></svg></button>
                  <button class="side-tool" aria-label="Center vertically"><svg viewBox="0 0 18 18"><path d="M2 7.500h14M4 9.500h10" stroke="#222"/><path d="M9 1v2M9 14v3" stroke="#e95420" stroke-width="2"/><path d="M6.500 3h5L9 6zM6.500 14.500h5L9 11.500z" fill="#e95420"/></svg></button>
                  <button class="side-tool" aria-label="Align bottom"><svg viewBox="0 0 18 18"><path d="M2 12.500h14M4 14.500h10" stroke="#222"/><path d="M9 1v5" stroke="#e95420" stroke-width="2"/><path d="M6 5l3 4 3-4z" fill="#e95420"/></svg></button>
                </div>
                <hr />
                <div class="two-col">
                  <div class="col">
                    <p class="caption">Spacing:</p>
                    <div class="icon-row faded">
                      <button class="side-tool" aria-label="Increase paragraph spacing"><svg viewBox="0 0 18 18"><path d="M1 2.500h9M1 4.500h9M1 6.500h9M1 12.500h9M1 14.500h9M1 16.500h9" stroke="#222"/><path d="M12 7h5l-2.500-4zM12 12h5l-2.500 4z" fill="#e95420"/></svg></button>
                      <button class="side-tool" aria-label="Decrease paragraph spacing"><svg viewBox="0 0 18 18"><path d="M1 3.500h9M1 6.500h9M1 8.500h9M1 11.500h9M1 13.500h9M1 15.500h9" stroke="#222"/><path d="M12 5h5l-2.500 4zM12 15h5l-2.500-4z" fill="#e95420"/></svg></button>
                    </div>
                    <div class="spin-row">
                      <label for="above"><svg width="16" height="18" viewBox="0 0 16 18"><path d="M2 2.500h12M2 4.500h12M2 12.500h12M2 14.500h12M2 16.500h12" stroke="#222"/><path d="M5 10h6L8 7z" fill="#e95420"/></svg></label>
                      <div class="spin"><input type="text" id="above" aria-label="Above paragraph spacing" /><button disabled aria-label="Decrease"><svg width="12" height="12"><use href="#minus"/></svg></button><button aria-label="Increase"><svg width="12" height="12"><use href="#plus"/></svg></button></div>
                    </div>
                    <div class="spin-row">
                      <label for="below"><svg width="16" height="18" viewBox="0 0 16 18"><path d="M2 2.500h12M2 4.500h12M2 6.500h12M2 14.500h12M2 16.500h12" stroke="#222"/><path d="M5 8h6l-3 3z" fill="#e95420"/></svg></label>
                      <div class="spin"><input type="text" id="below" aria-label="Below paragraph spacing" /><button disabled aria-label="Decrease"><svg width="12" height="12"><use href="#minus"/></svg></button><button aria-label="Increase"><svg width="12" height="12"><use href="#plus"/></svg></button></div>
                    </div>
                    <div class="icon-row line-row">
                      <button class="side-tool" aria-label="Line spacing"><svg viewBox="0 0 18 18"><path d="M1 2.500h9M1 5.500h9M1 8.500h9M1 11.500h9M1 14.500h9" stroke="#222"/><path d="M14.500 5v7" stroke="#e95420"/><path d="M12 6h5l-2.500-4zM12 11h5l-2.500 4z" fill="#e95420"/></svg></button>
                      <button class="side-drop" aria-label="Line spacing options"><svg width="12" height="12"><use href="#chevron"/></svg></button>
                    </div>
                  </div>
                  <div class="col">
                    <p class="caption">Indent:</p>
                    <div class="icon-row faded">
                      <button class="side-tool" aria-label="Increase indent"><svg viewBox="0 0 18 18"><path d="M8 4.500h8M8 7.500h8M8 10.500h8M3 13.500h13" stroke="#222"/><path d="M1 4v5l4-2.500z" fill="#e95420"/></svg></button>
                      <button class="side-tool" aria-label="Decrease indent"><svg viewBox="0 0 18 18"><path d="M8 4.500h8M8 7.500h8M8 10.500h8M3 13.500h13" stroke="#222"/><path d="M5 4v5L1 6.500z" fill="#e95420"/></svg></button>
                      <button class="side-tool" aria-label="Hanging indent"><svg viewBox="0 0 18 18"><path d="M3 3.500h13M8 6.500h8M8 9.500h8M8 12.500h8" stroke="#222"/><path d="M1 9v5l4-2.500z" fill="#e95420"/></svg></button>
                    </div>
                    <div class="spin-row">
                      <label for="before"><svg width="16" height="18" viewBox="0 0 16 18"><path d="M8 4.500h8M8 7.500h8M8 10.500h8M8 13.500h8" stroke="#222"/><path d="M1 4v5l4-2.500z" fill="#e95420"/></svg></label>
                      <div class="spin"><input type="text" id="before" aria-label="Before text indent" value="0.00 cm" /><button disabled aria-label="Decrease"><svg width="12" height="12"><use href="#minus"/></svg></button><button aria-label="Increase"><svg width="12" height="12"><use href="#plus"/></svg></button></div>
                    </div>
                    <div class="spin-row">
                      <label for="after"><svg width="16" height="18" viewBox="0 0 16 18"><path d="M0 4.500h8M0 7.500h8M0 10.500h8M0 13.500h8" stroke="#222"/><path d="M15 4v5l-4-2.500z" fill="#e95420"/></svg></label>
                      <div class="spin"><input type="text" id="after" aria-label="After text indent" value="0.00 cm" /><button disabled aria-label="Decrease"><svg width="12" height="12"><use href="#minus"/></svg></button><button aria-label="Increase"><svg width="12" height="12"><use href="#plus"/></svg></button></div>
                    </div>
                    <div class="spin-row">
                      <label for="first"><svg width="16" height="18" viewBox="0 0 16 18"><path d="M8 4.500h8M8 7.500h8M3 10.500h13M3 13.500h13" stroke="#222"/><path d="M1 4v5l4-2.500z" fill="#e95420"/></svg></label>
                      <div class="spin"><input type="text" id="first" aria-label="First line indent" value="0.00 cm" /><button disabled aria-label="Decrease"><svg width="12" height="12"><use href="#minus"/></svg></button><button aria-label="Increase"><svg width="12" height="12"><use href="#plus"/></svg></button></div>
                    </div>
                  </div>
                </div>
              </div>

              <h3 class="deck"><svg width="12" height="12"><use href="#chevron-right"/></svg>Area<svg class="gear" width="12" height="12"><use href="#gear"/></svg></h3>
              <h3 class="deck"><svg width="12" height="12"><use href="#chevron-right"/></svg>Line<svg class="gear" width="12" height="12"><use href="#gear"/></svg></h3>
              <h3 class="deck"><svg width="12" height="12"><use href="#chevron-right"/></svg>Shadow<svg class="gear" width="12" height="12"><use href="#gear"/></svg></h3>
              <h3 class="deck"><svg width="12" height="12"><use href="#chevron-right"/></svg>Position and Size<svg class="gear" width="12" height="12"><use href="#gear"/></svg></h3>
              <h3 class="deck"><svg width="12" height="12"><use href="#chevron-right"/></svg>Columns</h3>
            </div>

            <nav class="tabs" aria-label="Sidebar decks">
              <button aria-label="Sidebar settings"><svg width="12" height="12" viewBox="0 0 12 12"><path d="M1 1.500h10M1 6h10M1 10.500h10" stroke="#333"/></svg></button>
              <button class="tab-on" aria-label="Properties"><svg viewBox="0 0 24 24"><rect x="4" y="4" width="16" height="7" rx="3" fill="#e95420"/><rect x="4" y="13" width="16" height="7" rx="3" fill="#e95420"/><circle cx="16.500" cy="7.500" r="2.500" fill="#fff"/><circle cx="7.500" cy="16.500" r="2.500" fill="#fff"/></svg></button>
              <button aria-label="Styles"><svg viewBox="0 0 24 24"><path d="M11 10l4-9h1l4 9M13 7h6" fill="none" stroke="#222" stroke-width="2"/><path d="M5 8l8 8-4 4-7-7z" fill="#888" stroke="#333"/></svg></button>
              <button aria-label="Gallery"><svg viewBox="0 0 24 24"><rect x="2.500" y="3.500" width="15" height="12" rx="1" fill="#d25bc9" stroke="#333"/><rect x="5.500" y="7.500" width="16" height="13" rx="1" fill="#d25bc9" stroke="#333"/><path d="M8 18l3-4 3 2 2-1 3 3z" fill="#fff"/><circle cx="17" cy="11.500" r="1.300" fill="#fff"/></svg></button>
              <button aria-label="Navigator"><svg viewBox="0 0 24 24"><circle cx="12" cy="12" r="9.300" fill="#4a76e8" stroke="#3a4a70"/><path d="M17 7l-3 7-7 3 3-7z" fill="#fff"/><path d="M17 7l-7 3 4 4z" fill="#ef6a78"/></svg></button>
              <button aria-label="Shapes"><svg viewBox="0 0 24 24"><use href="#diamond"/></svg></button>
              <button aria-label="Slide transition"><svg viewBox="0 0 26 24"><use href="#board"/><path d="M18 15l6 4-6 4zM25 15v8" fill="#e95420" stroke="#e95420"/></svg></button>
              <button aria-label="Animation"><svg viewBox="0 0 24 24"><use href="#film"/></svg></button>
              <button aria-label="Master slides"><svg viewBox="0 0 24 24"><use href="#layout-pencil"/></svg></button>
            </nav>
          </aside>
        </div>

        <footer class="status">
          <span class="st-slide">Slide 1 of 28</span>
          <span class="st-objects">7 Drawing objects selected</span>
          <span class="st-layout">Title, Content</span>
          <span class="st-pos"><svg width="16" height="12" viewBox="0 0 16 12"><path d="M4 3.500h11v7H3V7" fill="none" stroke="#444" stroke-width="1.200"/><path d="M3 0v6M0 3h6" stroke="#e95420"/></svg>0.42 / 0.42</span>
          <span class="st-size"><svg width="16" height="12" viewBox="0 0 16 12"><rect x="4" y="4" width="11" height="7" fill="none" stroke="#444" stroke-width="1.200"/><path d="M4 1.500h11M4 0v3M15 0v3M1.500 4v7M0 4h3M0 11h3" stroke="#e95420"/></svg>24.55 x 18.21</span>
          <span class="st-save"><svg width="16" height="16"><use href="#save"/></svg></span>
          <span class="st-sign"></span>
          <span class="st-lang">English (USA)</span>
          <span class="st-zoom">
            <svg width="14" height="14" viewBox="0 0 14 14"><path d="M7 1v12M1 7h12M5 3l2-2 2 2M5 11l2 2 2-2M3 5L1 7l2 2M11 5l2 2-2 2" fill="none" stroke="#e95420" stroke-width="1.300"/></svg>
            <button aria-label="Zoom out"><svg width="10" height="10"><use href="#minus"/></svg></button>
            <input type="range" min="0" max="100" value="50" aria-label="Zoom" />
            <button aria-label="Zoom in"><svg width="10" height="10"><use href="#plus"/></svg></button>
            <span>107%</span>
          </span>
        </footer>
      </main>
    </div>
  </body>
</html>
```

FILE: styles.css
```css
:root {
  --ink: #3d3d3d;
  --line: #c6c6c6;
  --bg: #fafafa;
  --bar: #ebebeb;
  --accent: #e95420;
  --dark: #534947;
  --rust: #c5694f;
  --sage: #cbd0b9;
  --dash: #b5b0ae;
}

* {
  margin: 0;
  padding: 0;
  box-sizing: border-box;
}

body {
  font: 14px/18px "Noto Sans", sans-serif;
  color: var(--ink);
  background-color: #1d1016;
  height: 100vh;
  display: flex;
  flex-direction: column;
  overflow: hidden;
}

button,
input {
  font: inherit;
  color: inherit;
  background: none;
  border: none;
}

input {
  min-width: 0;
  outline: none;
}

svg {
  display: block;
  flex: none;
}

.sprite {
  position: absolute;
  width: 0;
  height: 0;
}

/* Top bar */
.topbar {
  height: 27px;
  flex: none;
  display: grid;
  grid-template-columns: 1fr auto 1fr;
  align-items: center;
  padding: 0 18px;
  background-color: #131313;
  color: #e8e8e8;
}

.topbar-left,
.topbar-app,
.topbar-clock,
.topbar-tray {
  display: flex;
  align-items: center;
}

.topbar-left {
  gap: 42px;
}

.topbar-app {
  gap: 7px;
}

.topbar-clock {
  gap: 18px;
  padding-left: 102px;
}

.topbar-tray {
  justify-content: flex-end;
  gap: 12px;
}

.desktop {
  flex: 1;
  min-height: 0;
  display: flex;
}

/* Dock */
.dock {
  width: 70px;
  flex: none;
  display: flex;
  flex-direction: column;
  align-items: center;
  gap: 4px;
  padding: 6px 0;
  background: linear-gradient(#190d14, #1c1016 70%, #28131f);
}

.dock-item {
  width: 64px;
  height: 64px;
  flex: none;
  display: flex;
  align-items: center;
  justify-content: center;
  border-radius: 12px;
}

.dock-item-active {
  position: relative;
  background-color: #453a41;
}

.dock-item-active::before {
  content: "";
  position: absolute;
  left: 0;
  width: 6px;
  height: 6px;
  border-radius: 3px;
  background-color: var(--accent);
}

.dock-line {
  width: 48px;
  margin: -1px 0;
  border: none;
  border-top: 1px solid #cfcbcd;
}

.dock-apps {
  margin-top: auto;
}

/* Window */
.window {
  flex: 1;
  min-width: 0;
  display: flex;
  flex-direction: column;
  background-color: var(--bg);
}

.titlebar {
  height: 37px;
  flex: none;
  display: grid;
  grid-template-columns: 1fr auto 1fr;
  align-items: center;
  background-color: var(--bar);
  border-bottom: 1px solid #bdbdbd;
}

.titlebar h1 {
  grid-column: 2;
  padding-top: 1px;
  font-size: 14px;
}

.window-buttons {
  display: flex;
  justify-content: flex-end;
  gap: 12px;
  padding-right: 7px;
}

.window-buttons button {
  width: 22px;
  height: 22px;
  display: grid;
  place-items: center;
  border-radius: 11px;
  background-color: #dadada;
}

.menubar {
  height: 25px;
  flex: none;
  display: flex;
  align-items: center;
  gap: 17px;
  padding: 1px 10px 0 9px;
  border-bottom: 1px solid #dcdcdc;
}

.menubar-close {
  margin-left: auto;
}

/* Toolbars */
.toolbar {
  height: 39px;
  flex: none;
  display: flex;
  align-items: center;
  padding: 0 0 1px 3px;
}

.tool {
  width: 33px;
  height: 34px;
  flex: none;
  display: grid;
  place-items: center;
  border: 1px solid transparent;
  border-radius: 6px;
}

.tool svg {
  width: 24px;
  height: 24px;
}

.tool-wide {
  width: 42px;
}

.tool-wide svg {
  width: 28px;
}

.tool-on {
  background-color: #d6d6d6;
  border-color: #c2c2c2;
}

.drop {
  width: 11px;
  height: 34px;
  flex: none;
  display: grid;
  place-items: center;
}

.drop::before {
  content: "";
  border: 3px solid transparent;
  border-top: 4px solid #000;
  border-bottom: none;
}

.drop-off::before {
  border-top-color: #bbb;
}

.sep,
.gap {
  width: 8px;
  height: 33px;
  flex: none;
}

.sep {
  background: linear-gradient(#dcdcdc, #dcdcdc) center / 1px 100% no-repeat;
}

/* Slides pane */
.workspace {
  flex: 1;
  min-height: 0;
  display: flex;
}

.slides {
  width: 196px;
  flex: none;
  display: flex;
  flex-direction: column;
  border-right: 1px solid #b4b4b4;
}

.slides-head {
  height: 36px;
  flex: none;
  display: flex;
  align-items: center;
  justify-content: space-between;
  padding: 2px 7px 0 3px;
}

.slides-head h2,
.panel-head h2,
.deck {
  font-size: 14px;
  line-height: 18px;
}

.slide-list {
  flex: 1;
  margin: 0 6px 4px 2px;
  padding: 8px;
  display: flex;
  flex-direction: column;
  gap: 10px;
  list-style: none;
  background-color: #fff;
  border: 1px solid #b4b4b4;
  border-width: 1px 0 0 1px;
}

.slide-item {
  height: 115px;
  display: flex;
  justify-content: flex-end;
  gap: 4px;
  padding: 3px;
  border: 1px solid transparent;
  font-weight: bold;
  color: #7d7d7d;
}

.slide-item span {
  line-height: 14px;
}

.slide-item-on {
  color: #6a4b40;
  background: linear-gradient(#cf9d8c, #e2b2a2);
  border-color: #a2604f;
}

.thumb {
  position: relative;
  width: 141px;
  height: 107px;
  display: grid;
  gap: 2px;
  padding: 2px 3px 3px 2px;
  background-color: #fff;
  border: 1px solid #6c6c6c;
  box-shadow: 1px 1px 3px #999;
}

/* Title, date, footer and number fields seen from far away */
.thumb::after,
.thumb-title::before {
  content: "";
  position: absolute;
  left: 7px;
  height: 2px;
}

.thumb::after {
  bottom: 5px;
  width: 126px;
  background:
    linear-gradient(#2e2a28, #2e2a28) 0 0 / 12px 2px no-repeat,
    linear-gradient(#3a3532, #3a3532) 60px 100% / 8px 1px no-repeat,
    linear-gradient(#998f8a, #998f8a) 100% 0 / 6px 2px no-repeat;
}

.thumb-title::before {
  top: 12px;
  width: 39px;
  background-color: #1a1615;
}

.thumb-side {
  grid-template-columns: 102fr 30fr;
}

.thumb-top {
  grid-template-rows: 20fr 76fr;
}

.fill-dark {
  background-color: var(--dark);
}

.fill-rust {
  background-color: var(--rust);
}

.fill-sage {
  background-color: var(--sage);
}

.grip {
  width: 7px;
  height: 73px;
  flex: none;
  align-self: center;
  display: grid;
  place-items: center;
  background-color: #999;
}

.grip::before {
  content: "";
  border: 4px solid transparent;
}

.grip-left {
  margin: 0 2px 0 -2px;
  z-index: 1;
}

.grip-left::before {
  border-right-color: #fff;
  border-left: none;
}

.grip-right::before {
  border-left-color: #fff;
  border-right: none;
}

/* Editor */
.editor {
  flex: 1;
  min-width: 0;
  display: flex;
  flex-direction: column;
  border-right: 1px solid #b4b4b4;
}

.infobar {
  height: 40px;
  flex: none;
  display: flex;
  align-items: center;
  padding: 0 1px 0 3px;
  color: #111;
  background-color: #bce5f7;
  border: 1px solid var(--line);
}

.infobar p {
  flex: 1;
  padding-left: 7px;
}

.info-btn {
  height: 34px;
  padding: 0 16px;
  color: var(--ink);
  background-color: #fff;
  border: 1px solid #cdcdcd;
  border-radius: 6px;
}

.info-close {
  margin-left: 5px;
  color: #0a4f92;
}

.editor-body {
  flex: 1;
  min-height: 0;
  display: flex;
}

.canvas {
  flex: 1;
  min-width: 0;
  overflow: hidden;
  padding: 11px 0 0 44px;
  background-color: #b9b9b9;
}

.vscroll {
  width: 12px;
  flex: none;
  padding: 198px 3px 0;
}

.vthumb {
  height: 408px;
  background-color: #898989;
  border-radius: 3px;
}

.hscroll {
  height: 11px;
  flex: none;
  padding: 3px 12px 0 362px;
}

.hthumb {
  width: 403px;
  height: 6px;
  background-color: #898989;
  border-radius: 3px;
}

/* Slide being edited: every object has its own place on the page */
.page {
  position: relative;
  width: 1029px;
  height: 773px;
  background-color: #fff;
  border: 1px solid #6c6c6c;
  box-shadow: 0 0 2px #666;
}

.shape,
.area,
.field,
.title-text,
.outline,
.selection,
.handle {
  position: absolute;
}

.shape {
  top: 17px;
  height: 736px;
}

.shape-dark {
  left: 16px;
  width: 753px;
}

.shape-rust {
  left: 786px;
  width: 223px;
}

.title-text,
.outline {
  font: 21px/30px "Liberation Sans", sans-serif;
  color: #000;
}

.title-text,
.outline span {
  text-decoration: underline;
  text-decoration-thickness: 2px;
  text-underline-offset: 5px;
}

.title-text {
  top: 81px;
  left: 50px;
}

.outline {
  top: 182px;
  left: 51px;
  list-style: none;
}

.outline li {
  display: flex;
}

.outline i {
  width: 23px;
  font-style: normal;
}

.outline .lv1 i,
.outline .lv2 i {
  width: 37px;
}

.outline .lv3 i {
  width: 32px;
}

.outline .lv4 i {
  width: 25px;
}

.lv1 {
  padding-left: 11px;
  height: 47px;
}

.lv2 {
  padding-left: 59px;
  height: 43px;
}

.lv3 {
  padding-left: 113px;
  height: 39px;
}

.lv4 {
  padding-left: 168px;
  height: 35px;
}

.lv5 {
  padding-left: 219px;
  height: 35px;
}

.lv6 {
  padding-left: 268px;
  height: 34px;
}

.lv7 {
  padding-left: 316px;
}

.area {
  display: flex;
  align-items: flex-end;
  justify-content: flex-end;
  padding: 0 9px 1px 0;
  font: 20px/24px "DejaVu Sans", sans-serif;
  white-space: nowrap;
  color: #bfbfbf;
  background:
    repeating-linear-gradient(90deg, var(--dash) 0 6px, transparent 6px 9px) top / 100% 1px no-repeat,
    repeating-linear-gradient(90deg, var(--dash) 0 6px, transparent 6px 9px) bottom / 100% 1px no-repeat,
    repeating-linear-gradient(var(--dash) 0 6px, transparent 6px 9px) left / 1px 100% no-repeat,
    repeating-linear-gradient(var(--dash) 0 6px, transparent 6px 9px) right / 1px 100% no-repeat;
}

.area-object {
  left: 50px;
  top: 180px;
  width: 926px;
  height: 448px;
}

.area-date,
.area-footer,
.area-number {
  top: 714px;
  height: 32px;
}

.area-date {
  left: 41px;
  width: 241px;
}

.area-footer {
  left: 341px;
  width: 378px;
}

.area-number {
  left: 924px;
  width: 67px;
}

.field {
  top: 718px;
  font: 20px/24px "Liberation Serif", serif;
  color: #000;
}

.field-date {
  left: 51px;
}

.field-footer {
  left: 492px;
  font-style: italic;
}

.field-number {
  left: 934px;
  top: 722px;
  font: 16px/16px "Liberation Sans", sans-serif;
  color: #fff;
}

.selection {
  inset: 17px 17px 16px 16px;
}

.handle {
  width: 7px;
  height: 7px;
  margin: -3px;
  background-color: #8faaf5;
  outline: 1px solid #e4e9fb;
}

.tl, .tc, .tr { top: 0; }
.ml, .mr { top: 50%; }
.bl, .bc, .br { bottom: 0; }
.tl, .ml, .bl { left: 0; }
.tc, .bc { left: 50%; }
.tr, .mr, .br { right: 0; }

/* Sidebar */
.sidebar {
  width: 504px;
  flex: none;
  display: flex;
}

.panel {
  flex: 1;
  min-width: 0;
  padding: 4px 0 0 2px;
  display: flex;
  flex-direction: column;
}

.panel-head {
  height: 22px;
  flex: none;
  display: flex;
  align-items: center;
  gap: 6px;
  padding: 0 5px 2px 2px;
}

.panel-head button {
  margin-left: auto;
}

.deck {
  height: 18px;
  flex: none;
  display: flex;
  align-items: center;
  gap: 2px;
  padding: 0 3px 0 2px;
  margin-bottom: 1px;
  background-color: var(--bar);
}

.gear {
  margin-left: auto;
}

.gear-off {
  opacity: 0.5;
}

.character {
  height: 144px;
  padding: 9px 10px 0;
}

.font-row {
  display: flex;
  gap: 14px;
  margin-bottom: 7px;
}

.font-name,
.font-size {
  height: 34px;
  display: flex;
  background-color: #fff;
  border: 1px solid var(--line);
  border-radius: 6px;
}

.font-name {
  position: relative;
  flex: 1;
  max-width: 317px;
}

.font-name input {
  flex: 1;
  margin: -1px 0 -1px -1px;
  padding-left: 4px;
  border: 2px solid #f6a68d;
  border-radius: 6px 0 0 6px;
}

.font-name button,
.font-size button {
  width: 34px;
  display: grid;
  place-items: center;
}

.font-name button {
  background-color: #f5f5f5;
  border-radius: 0 6px 6px 0;
}

.font-size {
  width: 101px;
}

.font-size input {
  flex: 1;
  border-right: 1px solid var(--line);
}

.pointer {
  position: absolute;
  left: 302px;
  top: 15px;
  z-index: 3;
}

.tooltip {
  position: absolute;
  left: 14px;
  top: 43px;
  z-index: 2;
  padding: 12px 16px 13px 13px;
  white-space: nowrap;
  color: #fff;
  background-color: rgba(20, 20, 20, 0.87);
  border-radius: 4px;
}

.icon-row {
  height: 44px;
  display: flex;
  align-items: center;
}

.side-tool {
  width: 37px;
  height: 34px;
  flex: none;
  display: grid;
  place-items: center;
  border: 1px solid transparent;
  border-radius: 6px;
}

.side-tool svg {
  width: 18px;
  height: 18px;
}

.side-tool-wide {
  width: 49px;
  padding-left: 12px;
}

.side-drop {
  width: 31px;
  height: 34px;
  padding-right: 14px;
  display: grid;
  place-items: center;
}

.side-drop-end {
  width: 18px;
  padding: 0;
}

.push {
  flex: 1;
}

.side-on {
  background-color: #d6d6d6;
  border-color: #c2c2c2;
}

.paragraph {
  height: 261px;
}

.align-row {
  height: 53px;
  padding: 0 10px 1px;
}

.paragraph hr {
  margin: 0 9px;
  border: none;
  border-top: 1px solid #dcdcdc;
}

.two-col {
  display: grid;
  grid-template-columns: 1fr 1fr;
  padding-right: 6px;
}

.col {
  padding: 3px 0 0 6px;
}

.caption {
  line-height: 18px;
}

.faded {
  height: 45px;
  margin-bottom: 2px;
  padding-left: 3px;
}

.faded svg {
  opacity: 0.55;
}

.line-row {
  height: 42px;
  padding-left: 6px;
}

.spin-row {
  display: flex;
  align-items: center;
  gap: 9px;
  padding-left: 6px;
  margin-bottom: 3px;
}

.spin {
  width: 186px;
  height: 42px;
  display: flex;
  background-color: #fff;
  border: 1px solid var(--line);
  border-radius: 6px;
  color: #111;
}

.spin input {
  flex: 1;
  padding-left: 8px;
}

.spin button {
  width: 35px;
  display: grid;
  place-items: center;
  color: #333;
  border-left: 1px solid #e6e6e6;
}

.spin button:disabled {
  color: #d6d6d6;
}

.tabs {
  width: 50px;
  flex: none;
  display: flex;
  flex-direction: column;
  align-items: center;
  gap: 8px;
  padding: 2px 6px 0 0;
}

.tabs button {
  width: 36px;
  height: 34px;
  display: grid;
  place-items: center;
  border: 1px solid transparent;
  border-radius: 6px;
}

.tabs button + button svg {
  width: 24px;
  height: 24px;
}

.tabs .tab-on {
  margin-top: 3px;
  background-color: #d6d6d6;
  border-color: #c2c2c2;
}

/* Status bar */
.status {
  height: 22px;
  flex: none;
  display: flex;
  align-items: center;
  padding-top: 1px;
  border-top: 1px solid #b4b4b4;
  font-size: 12px;
  line-height: 14px;
}

.status > span {
  display: flex;
  align-items: center;
  gap: 5px;
  padding-left: 9px;
  height: 14px;
  border-right: 1px solid #dcdcdc;
}

.st-slide {
  width: 83px;
}

.st-objects {
  width: 528px;
}

.st-layout {
  width: 382px;
}

.st-pos {
  width: 104px;
}

.status .st-pos,
.status .st-size {
  padding-left: 10px;
}

.status .st-pos {
  border-right: none;
}

.st-size {
  width: 112px;
}

.status .st-save {
  width: 22px;
  padding-left: 5px;
}

.st-sign {
  width: 29px;
}

.st-lang {
  flex: 1;
  justify-content: center;
}

.status .st-zoom {
  padding: 0 10px 0 12px;
  border-right: none;
}

.st-zoom button {
  width: 12px;
  display: grid;
  place-items: center;
}

.st-zoom > svg {
  margin-right: 7px;
}

.st-zoom > span {
  margin-left: 7px;
}

.st-zoom input {
  width: 94px;
  height: 10px;
  appearance: none;
  background: linear-gradient(#777, #777) center / 100% 1px no-repeat;
}

.st-zoom input::-webkit-slider-thumb {
  appearance: none;
  width: 8px;
  height: 8px;
  border: 1px solid #666;
  border-radius: 4px;
  background-color: #fff;
}
```
